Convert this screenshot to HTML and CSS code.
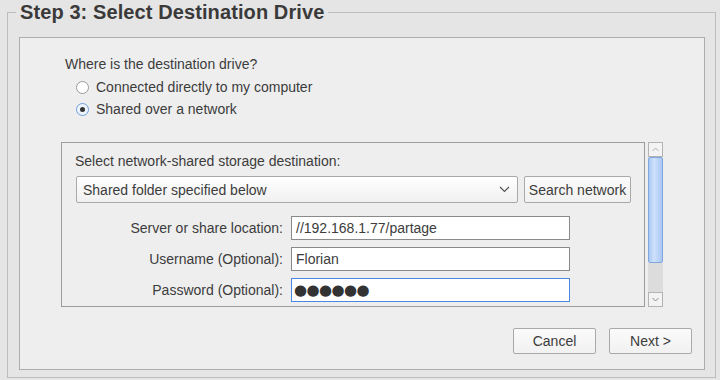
FILE: index.html
```html
<!DOCTYPE html>
<html lang="en">

<head>
    <meta charset="UTF-8">
    <meta name="viewport" content="width=device-width, initial-scale=1.0">
    <title>Select Destination Drive</title>
    <link rel="stylesheet" href="styles.css">
</head>

<body>
    <fieldset class="step">
        <legend>Step 3: Select Destination Drive</legend>
        <div class="page">
            <div class="question">Where is the destination drive?</div>
            <div class="options">
                <label class="option"><span class="radio"></span>Connected directly to my computer</label>
                <label class="option"><span class="radio checked"></span>Shared over a network</label>
            </div>

            <div class="scroll-row">
                <div class="group">
                    <div class="group-title">Select network-shared storage destination:</div>
                    <div class="combo-row">
                        <div class="combo">
                            <span>Shared folder specified below</span>
                            <svg width="11" height="7" viewBox="0 0 11 7"><polyline points="1,1 5.5,5.5 10,1" fill="none" stroke="#555" stroke-width="1.2"/></svg>
                        </div>
                        <div class="button small">Search network</div>
                    </div>
                    <div class="fields">
                        <div class="field-label">Server or share location:</div>
                        <div class="input">//192.168.1.77/partage</div>
                        <div class="field-label">Username (Optional):</div>
                        <div class="input">Florian</div>
                        <div class="field-label">Password (Optional):</div>
                        <div class="input focus dots">&#9679;&#9679;&#9679;&#9679;&#9679;&#9679;</div>
                    </div>
                </div>
                <div class="scrollbar">
                    <div class="arrow">
                        <svg width="7" height="5" viewBox="0 0 7 5"><polyline points="0.5,4 3.5,1 6.5,4" fill="none" stroke="#b0b0b0" stroke-width="1"/></svg>
                    </div>
                    <div class="thumb"></div>
                    <div class="track"></div>
                    <div class="arrow">
                        <svg width="7" height="5" viewBox="0 0 7 5"><polyline points="0.5,1 3.5,4 6.5,1" fill="none" stroke="#888" stroke-width="1"/></svg>
                    </div>
                </div>
            </div>

            <div class="actions">
                <div class="button">Cancel</div>
                <div class="button">Next &gt;</div>
            </div>
        </div>
    </fieldset>
</body>

</html>
```

FILE: styles.css
```css
body {
    margin: 0;
    background-color: #e5e5e5;
    font-family: "Liberation Sans", Arial, sans-serif;
    font-size: 14px;
    color: #3c3c3c;
}

.step {
    margin: 0 4px 2px 7px;
    padding: 0;
    border: 1px solid #bdbdbd;
    height: 378px;
    box-sizing: border-box;
}

.step legend {
    margin-left: 8px;
    padding: 0 4px;
    font-size: 20px;
    line-height: 24px;
    letter-spacing: 0.1px;
    font-weight: bold;
    color: #3a3a3a;
}

.page {
    margin: 13px 10px 0 11px;
    height: 333px;
    box-sizing: border-box;
    background-color: #eeeeee;
    border: 1px solid #adadad;
    padding: 18px 12px 0 41px;
}

.question {
    padding-left: 4px;
    line-height: 16px;
}

.options {
    padding-left: 15px;
    margin-top: 4px;
}

.option {
    display: flex;
    align-items: center;
    height: 22px;
    gap: 7px;
}

.radio {
    width: 11px;
    height: 11px;
    border: 1px solid #9a9a9a;
    border-radius: 50%;
    background: #fff;
    display: flex;
    align-items: center;
    justify-content: center;
}

.radio.checked {
    border-color: #6f9de0;
    background: #eef4fc;
}

.radio.checked::after {
    content: "";
    width: 5px;
    height: 5px;
    border-radius: 50%;
    background: #333;
}

.scroll-row {
    display: flex;
    gap: 3px;
    margin-top: 22px;
    height: 165px;
}

.group {
    width: 584px;
    box-sizing: border-box;
    border: 1px solid #9c9c9c;
    padding: 10px 13px 0 13px;
    overflow: hidden;
}

.group-title {
    line-height: 16px;
}

.combo-row {
    display: flex;
    gap: 6px;
    margin-top: 7px;
    padding-left: 1px;
}

.combo {
    width: 442px;
    height: 27px;
    box-sizing: border-box;
    border: 1px solid #a9a9a9;
    border-radius: 2px;
    background: linear-gradient(#ffffff, #f0f0f0);
    display: flex;
    align-items: center;
    justify-content: space-between;
    padding: 0 7px 0 6px;
}

.button {
    height: 26px;
    box-sizing: border-box;
    border: 1px solid #a9a9a9;
    border-radius: 2px;
    background: linear-gradient(#fbfbfb, #f1f1f1);
    display: flex;
    align-items: center;
    justify-content: center;
    width: 83px;
}

.button.small {
    width: 107px;
    height: 27px;
}

.fields {
    display: grid;
    grid-template-columns: 208px 279px;
    column-gap: 8px;
    row-gap: 7px;
    margin-top: 13px;
    align-items: center;
}

.field-label {
    text-align: right;
}

.input {
    height: 24px;
    box-sizing: border-box;
    border: 1px solid #8a8a8a;
    background: #fff;
    padding: 0 4px;
    display: flex;
    align-items: center;
}

.input.focus {
    border-color: #4a87e0;
}

.dots {
    font-family: "DejaVu Sans", sans-serif;
    font-size: 15px;
    letter-spacing: -0.6px;
    padding-left: 2px;
    color: #333;
}

.scrollbar {
    width: 15px;
    display: flex;
    flex-direction: column;
}

.arrow {
    height: 15px;
    box-sizing: border-box;
    border: 1px solid #b3b3b3;
    background: #f3f3f3;
    display: flex;
    align-items: center;
    justify-content: center;
}

.thumb {
    height: 106px;
    box-sizing: border-box;
    border: 1px solid #7fa6de;
    border-radius: 2px;
    background: linear-gradient(90deg, #a9c8f4, #cfe1fb 40%, #a9c8f4);
}

.track {
    flex: 1;
    background: #dcdcdc;
}

.actions {
    display: flex;
    justify-content: flex-end;
    gap: 13px;
    margin-top: 21px;
}
```
